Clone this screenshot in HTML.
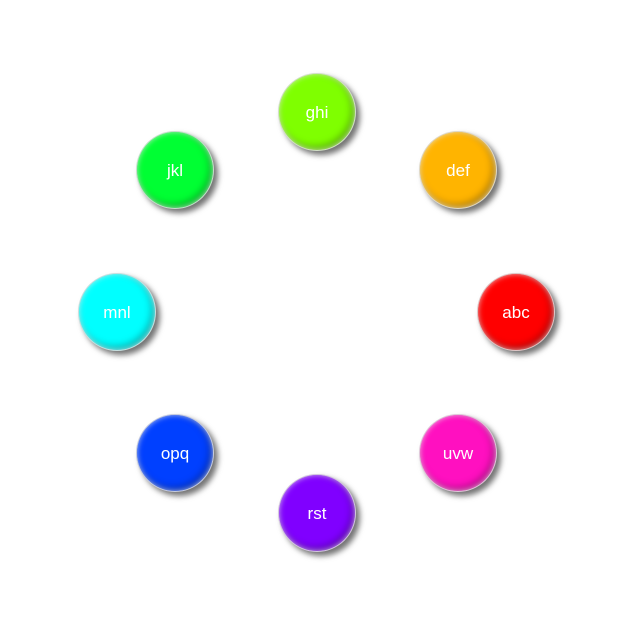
<!DOCTYPE html>
<html><head><style>
html,body{margin:0;width:620px;height:620px;background:#fff;overflow:hidden}
.b{position:absolute;width:76px;height:76px;border-radius:50%;
box-shadow:4px 4px 6px rgba(0,0,0,.55), inset 0 0 6px rgba(255,255,255,.7), inset -3px -3px 8px rgba(0,0,0,.35);
border:1px solid rgba(220,220,220,.9);
color:#fff;font:17px "Liberation Sans",sans-serif;display:flex;align-items:center;justify-content:center;padding-top:2px;box-sizing:content-box;height:74px}
</style></head><body>
<div class="b" style="left:477px;top:273px;background:#ff0000">abc</div>
<div class="b" style="left:419px;top:131px;background:#ffb400">def</div>
<div class="b" style="left:278px;top:73px;background:#7fff00">ghi</div>
<div class="b" style="left:136px;top:131px;background:#00ff33">jkl</div>
<div class="b" style="left:78px;top:273px;background:#00ffff">mnl</div>
<div class="b" style="left:136px;top:414px;background:#0040ff">opq</div>
<div class="b" style="left:278px;top:474px;background:#8000ff">rst</div>
<div class="b" style="left:419px;top:414px;background:#ff10c0">uvw</div>
</body></html>
